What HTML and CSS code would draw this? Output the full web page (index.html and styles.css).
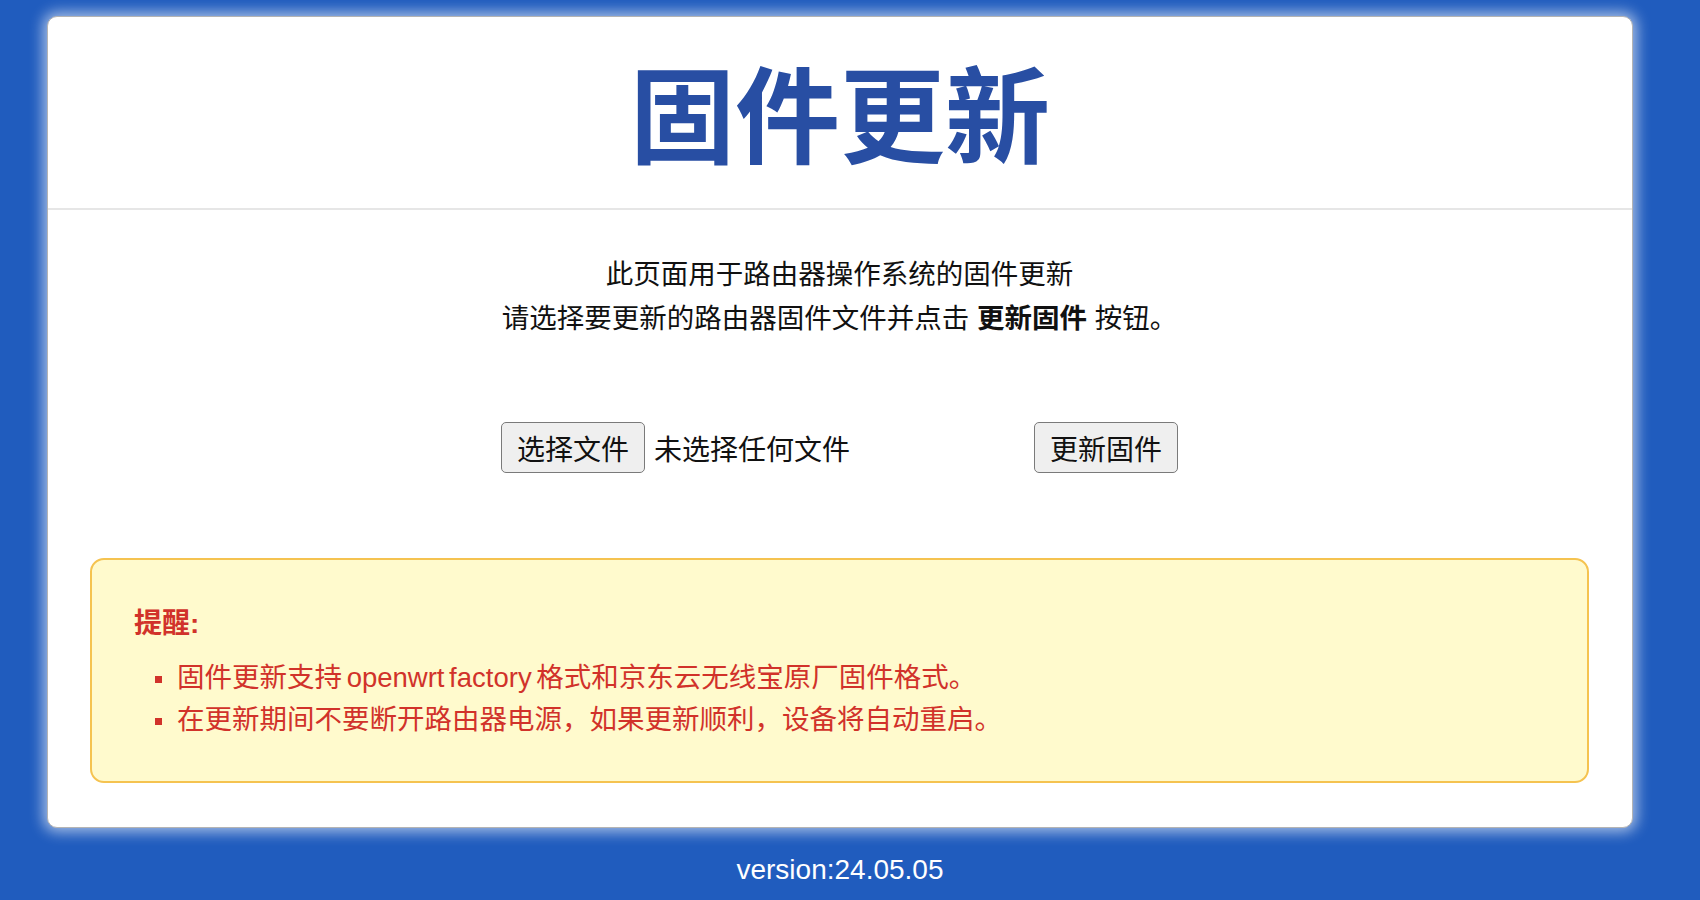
FILE: index.html
```html
<!DOCTYPE html>
<html lang="zh-CN">
<head>
  <meta charset="UTF-8">
  <meta name="viewport" content="width=device-width, initial-scale=1.0">
  <title>固件更新</title>
  <link rel="stylesheet" href="styles.css">
</head>
<body>
  <div class="page">
    <div class="card">
      <div class="card-header">
        <h1>固件更新</h1>
      </div>

      <div class="card-body">
        <p class="intro">
          此页面用于路由器操作系统的固件更新<br>
          请选择要更新的路由器固件文件并点击 <b>更新固件</b> 按钮。
        </p>

        <!-- Choix du fichier + bouton -->
        <form class="upload-row" onsubmit="return false">
          <div class="file-input">
            <button type="button" class="btn">选择文件</button>
            <span class="file-name">未选择任何文件</span>
          </div>
          <button type="submit" class="btn">更新固件</button>
        </form>

        <div class="notice">
          <h4>提醒:</h4>
          <ul>
            <li>固件更新支持 openwrt factory 格式和京东云无线宝原厂固件格式。</li>
            <li>在更新期间不要断开路由器电源，如果更新顺利，设备将自动重启。</li>
          </ul>
        </div>
      </div>
    </div>

    <div class="version">version:24.05.05</div>
  </div>
</body>
</html>
```

FILE: styles.css
```css
html, body {
  margin: 0;
  height: 100%;
}

body {
  background-color: #205cbe;
  font-family: "Liberation Sans", "Noto Sans CJK SC", sans-serif;
  font-size: 28px;
  color: #111;
  overflow: hidden;
}

.page {
  width: 1680px;
  padding-top: 16px;
}

.card {
  margin: 0 47px;
  background-color: white;
  border: 1px solid #b4b4b4;
  border-radius: 10px;
  box-shadow: 0 0 14px 4px rgba(255, 255, 255, 0.6);
}

.card-header {
  padding: 49px 0 37px;
  border-bottom: 2px solid #e6e6e6;
  text-align: center;
}

.card-header h1 {
  margin: 0;
  font-size: 105px;
  line-height: 1;
  font-weight: 700;
  color: #284ea3;
}

.card-body {
  padding: 43px 43px 44px 42px;
}

.intro {
  margin: 0;
  text-align: center;
  font-size: 27.5px;
  line-height: 44px;
}

.intro b {
  font-weight: 700;
}

.upload-row {
  display: flex;
  justify-content: center;
  align-items: center;
  margin: 81px 0 85px;
}

.file-input {
  display: flex;
  align-items: center;
  gap: 9px;
  width: 533px;
}

.btn {
  height: 51px;
  padding: 0 15px;
  font-family: inherit;
  font-size: 28px;
  color: #111;
  background-color: #efefef;
  border: 1.5px solid #7a7a7a;
  border-radius: 5px;
  cursor: pointer;
}

.notice {
  background-color: #fffacd;
  border: 2px solid #f5c350;
  border-radius: 14px;
  padding: 44px 42px 40px;
  color: #d1322a;
}

.notice h4 {
  margin: 0 0 13px;
  font-size: 28px;
  line-height: 40px;
  font-weight: 700;
}

.notice ul {
  margin: 0;
  padding: 0;
  list-style: none;
}

.notice li {
  font-size: 27.5px;
  line-height: 42px;
  word-spacing: -3px;
}

.notice li::before {
  content: "";
  display: inline-block;
  width: 7px;
  height: 7px;
  margin: 0 15px 0 21px;
  vertical-align: middle;
  background-color: #d1322a;
}

.version {
  margin-top: 22px;
  text-align: center;
  color: white;
  line-height: 40px;
}
```
